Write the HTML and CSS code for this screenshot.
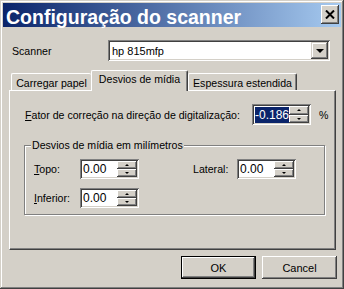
FILE: index.html
```html
<!DOCTYPE html>
<html lang="pt">
<head>
    <meta charset="UTF-8">
    <meta name="viewport" content="width=device-width, initial-scale=1.0">
    <title>Configuração do scanner</title>
    <link rel="stylesheet" href="styles.css">
</head>
<body>
    <div class="window">
        <div class="titlebar">
            <span class="title">Configuração do scanner</span>
            <button class="close">
                <svg width="10" height="9" viewBox="0 0 10 9"><path d="M1 0.5 L9 8.5 M9 0.5 L1 8.5" stroke="#000" stroke-width="2"/></svg>
            </button>
        </div>
        <div class="content">
            <div class="scanner-row">
                <span class="scanner-label">Scanner</span>
                <div class="combo">
                    <span class="combo-text">hp 815mfp</span>
                    <span class="combo-btn"><i class="arrow-down big"></i></span>
                </div>
            </div>
            <div class="tabs">
                <div class="tab tab-1">Carregar papel</div>
                <div class="tab tab-2 active">Desvios de mídia</div>
                <div class="tab tab-3">Espessura estendida</div>
            </div>
            <div class="panel">
                <div class="fator-row">
                    <span class="fator-label"><u>F</u>ator de correção na direção de digitalização:</span>
                    <div class="spin spin-tall">
                        <span class="spin-text"><span class="selected">-0.186</span></span>
                        <span class="spin-btns"><span class="spin-btn"><i class="arrow-up"></i></span><span class="spin-btn"><i class="arrow-down"></i></span></span>
                    </div>
                    <span class="pct">%</span>
                </div>
                <fieldset class="group">
                    <legend>Desvios de mídia em milímetros</legend>
                    <div class="group-grid">
                        <span class="field-label"><u>T</u>opo:</span>
                        <div class="spin">
                            <span class="spin-text">0.00</span>
                            <span class="spin-btns"><span class="spin-btn"><i class="arrow-up"></i></span><span class="spin-btn"><i class="arrow-down"></i></span></span>
                        </div>
                        <span></span>
                        <span class="field-label">Lateral:</span>
                        <div class="spin">
                            <span class="spin-text">0.00</span>
                            <span class="spin-btns"><span class="spin-btn"><i class="arrow-up"></i></span><span class="spin-btn"><i class="arrow-down"></i></span></span>
                        </div>
                        <span class="field-label"><u>I</u>nferior:</span>
                        <div class="spin">
                            <span class="spin-text">0.00</span>
                            <span class="spin-btns"><span class="spin-btn"><i class="arrow-up"></i></span><span class="spin-btn"><i class="arrow-down"></i></span></span>
                        </div>
                    </div>
                </fieldset>
            </div>
            <div class="buttons">
                <button class="btn default">OK</button>
                <button class="btn">Cancel</button>
            </div>
        </div>
    </div>
</body>
</html>
```

FILE: styles.css
```css
body{
    margin: 0;
    background: #d4d0c8;
    font-family: "Liberation Sans", Arial, sans-serif;
    font-size: 10.6px;
    color: #000;
}
.window{
    width: 344px;
    height: 289px;
    box-sizing: border-box;
    padding: 3px;
    background: #d4d0c8;
    box-shadow: inset -1px -1px #404040, inset 1px 1px #d4d0c8, inset -2px -2px #808080, inset 2px 2px #fff;
}
/* barra de titulo */
.titlebar{
    height: 24px;
    display: flex;
    justify-content: space-between;
    align-items: flex-start;
    background: linear-gradient(to right, #0a246a, #a6caf0);
    padding: 0 2px 0 3px;
}
.title{
    color: #fff;
    font-weight: bold;
    font-size: 19.5px;
    line-height: 20px;
    padding-top: 4px;
    white-space: nowrap;
}
.close{
    width: 18px;
    height: 19px;
    margin-top: 2px;
    padding: 0;
    border: none;
    background: #d4d0c8;
    box-shadow: inset -1px -1px #404040, inset 1px 1px #fff, inset -2px -2px #808080;
    display: flex;
    align-items: center;
    justify-content: center;
}
.content{
    display: flex;
    flex-direction: column;
}
.scanner-row{
    display: flex;
    align-items: center;
    margin-top: 13px;
    padding-left: 9px;
}
.scanner-label{
    width: 96px;
}
/* campos afundados */
.combo, .spin{
    box-sizing: border-box;
    background: #fff;
    display: flex;
    align-items: center;
    padding: 2px;
    box-shadow: inset 1px 1px #808080, inset -1px -1px #fff, inset 2px 2px #404040, inset -2px -2px #d4d0c8;
}
.combo{
    width: 222px;
    height: 21px;
}
.combo-text{
    flex: 1;
    padding-left: 2px;
    font-size: 11px;
}
.combo-btn{
    width: 17px;
    height: 17px;
    box-sizing: border-box;
    background: #d4d0c8;
    box-shadow: inset -1px -1px #404040, inset 1px 1px #d4d0c8, inset -2px -2px #808080, inset 2px 2px #fff;
    display: flex;
    align-items: center;
    justify-content: center;
}
.arrow-down, .arrow-up{
    display: block;
    width: 0;
    height: 0;
    border-style: solid;
    border-color: transparent;
}
.arrow-down{
    border-width: 2px 2px 0;
    border-top-color: #000;
}
.arrow-up{
    border-width: 0 2px 2px;
    border-bottom-color: #000;
}
.arrow-down.big{
    border-width: 4px 4px 0;
    margin-top: 1px;
}
/* abas */
.tabs{
    display: flex;
    align-items: flex-end;
    height: 20px;
    margin-top: 9px;
    padding-left: 8px;
}
.tab{
    box-sizing: border-box;
    height: 17px;
    border: 1px solid #fff;
    border-bottom: none;
    border-right-color: #404040;
    border-radius: 2px 2px 0 0;
    box-shadow: inset -1px 0 #808080;
    text-align: center;
    line-height: 16px;
    padding-top: 1px;
    white-space: nowrap;
}
.tab-1{ width: 80px; border-right: none; box-shadow: none; }
.tab-2{ width: 97px; }
.tab-3{ width: 109px; }
.tab.active{
    height: 21px;
    margin-bottom: -1px;
    background: #d4d0c8;
    position: relative;
    line-height: 17px;
    padding-top: 0;
}
.panel{
    margin-left: 6px;
    width: 327px;
    height: 160px;
    box-sizing: border-box;
    border: 1px solid;
    border-color: #fff #404040 #404040 #fff;
    box-shadow: inset -1px -1px #808080;
    padding: 13px 0 0 14px;
}
.fator-row{
    display: flex;
    align-items: center;
    padding-left: 1px;
}
.fator-label{
    width: 227px;
}
.spin{
    width: 59px;
    height: 20px;
}
.spin.spin-tall{
    height: 21px;
}
.spin-text{
    flex: 1;
    padding-left: 1px;
    font-size: 12px;
}
.selected{
    background: #0a246a;
    color: #fff;
    padding: 1px 0;
}
.spin-btns{
    display: flex;
    flex-direction: column;
    width: 20px;
    height: 100%;
}
.spin-btn{
    flex: 1;
    background: #d4d0c8;
    box-shadow: inset -1px -1px #404040, inset 1px 1px #fff, inset -2px -2px #808080;
    display: flex;
    align-items: center;
    justify-content: center;
}
.pct{
    margin-left: 8px;
}
/* grupo */
.group{
    margin: 14px 0 0;
    width: 301px;
    box-sizing: border-box;
    border: 1px solid #808080;
    box-shadow: 1px 1px #fff, inset 1px 1px #fff;
    padding: 7px 0 6px 9px;
    min-width: 0;
}
.group legend{
    padding: 0 1px;
    margin-left: -3px;
    background: #d4d0c8;
    line-height: 13px;
}
.group-grid{
    display: grid;
    grid-template-columns: 46px 59px 54px 44px 59px;
    row-gap: 9px;
    align-items: center;
}
/* botoes */
.buttons{
    display: flex;
    justify-content: flex-end;
    gap: 6px;
    margin-top: 6px;
    padding-right: 4px;
}
.btn{
    width: 75px;
    height: 23px;
    padding: 0;
    border: none;
    background: #d4d0c8;
    font-family: "Liberation Sans", Arial, sans-serif;
    font-size: 11px;
    color: #000;
    box-shadow: inset -1px -1px #404040, inset 1px 1px #fff, inset -2px -2px #808080;
}
.btn.default{
    box-shadow: inset 0 0 0 1px #000, inset -2px -2px #404040, inset 2px 2px #fff, inset -3px -3px #808080;
}
```
